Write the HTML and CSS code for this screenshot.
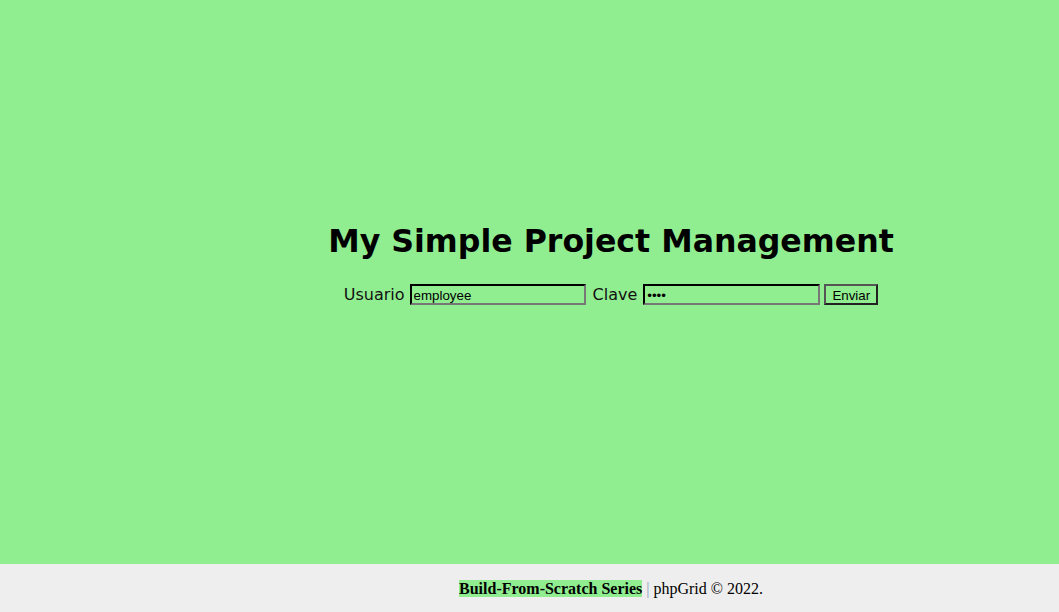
FILE: index.html
```html
<!DOCTYPE html>
<html lang="es">
<head>
<meta charset="utf-8">
<title>My Simple Project Management</title>
<link rel="stylesheet" href="styles.css">
</head>
<body>
<main class="main">
  <div class="content">
    <h1 class="title">My Simple Project Management</h1>
    <form class="login">
      <label class="lbl" for="u">Usuario</label>
      <input class="field field-user" id="u" type="text" value="employee">
      <label class="lbl" for="p">Clave</label>
      <input class="field field-pass" id="p" type="password" value="1234">
      <button class="btn" type="button">Enviar</button>
    </form>
  </div>
</main>
<footer class="footer">
  <p class="credits"><span class="series">Build-From-Scratch Series</span> <span class="pipe">|</span> phpGrid &copy; 2022.</p>
</footer>
</body>
</html>
```
FILE: styles.css
```css
html, body {
  margin: 0;
  padding: 0;
}
body {
  background: #eeeeee;
  font-family: "DejaVu Sans", Verdana, sans-serif;
  color: #000;
}
.main {
  background: #90ee90;
  height: 564px;
  box-sizing: border-box;
  padding-top: 223px;
  padding-left: 163px;
}
.content {
  display: flex;
  flex-direction: column;
  align-items: center;
}
.title {
  margin: 0;
  font-size: 31.6px;
  font-weight: bold;
  line-height: 37px;
}
.login {
  margin-top: 24px;
  font-size: 16px;
  line-height: 21px;
  display: flex;
  align-items: center;
}
.lbl {
  color: #111;
}
.field {
  box-sizing: border-box;
  width: 176px;
  height: 21px;
  margin: 0 7px 0 5px;
  padding: 2px 2px 0;
  border: 2px inset;
  border-color: #333 #777 #777 #333;
  background: transparent;
  font-family: "Liberation Sans", Arial, sans-serif;
  font-size: 13.33px;
  color: #000;
}
.field-pass {
  width: 177px;
  margin: 0 4px 0 6px;
}
.btn {
  box-sizing: border-box;
  height: 21px;
  width: 54px;
  margin: 0;
  padding: 1px 4px 0;
  border: 2px solid;
  border-color: #555 #222 #222 #555;
  background: transparent;
  font-family: "Liberation Sans", Arial, sans-serif;
  font-size: 13.33px;
  color: #000;
}
.footer {
  height: 48px;
  display: flex;
  align-items: center;
  justify-content: center;
  padding-left: 163px;
  padding-top: 1px;
  box-sizing: border-box;
  font-family: "Liberation Serif", "Times New Roman", serif;
  font-size: 16px;
}
.credits {
  margin: 0;
}
.series {
  font-weight: bold;
  background: #90ee90;
}
.pipe {
  color: #8aa4c0;
}
```
